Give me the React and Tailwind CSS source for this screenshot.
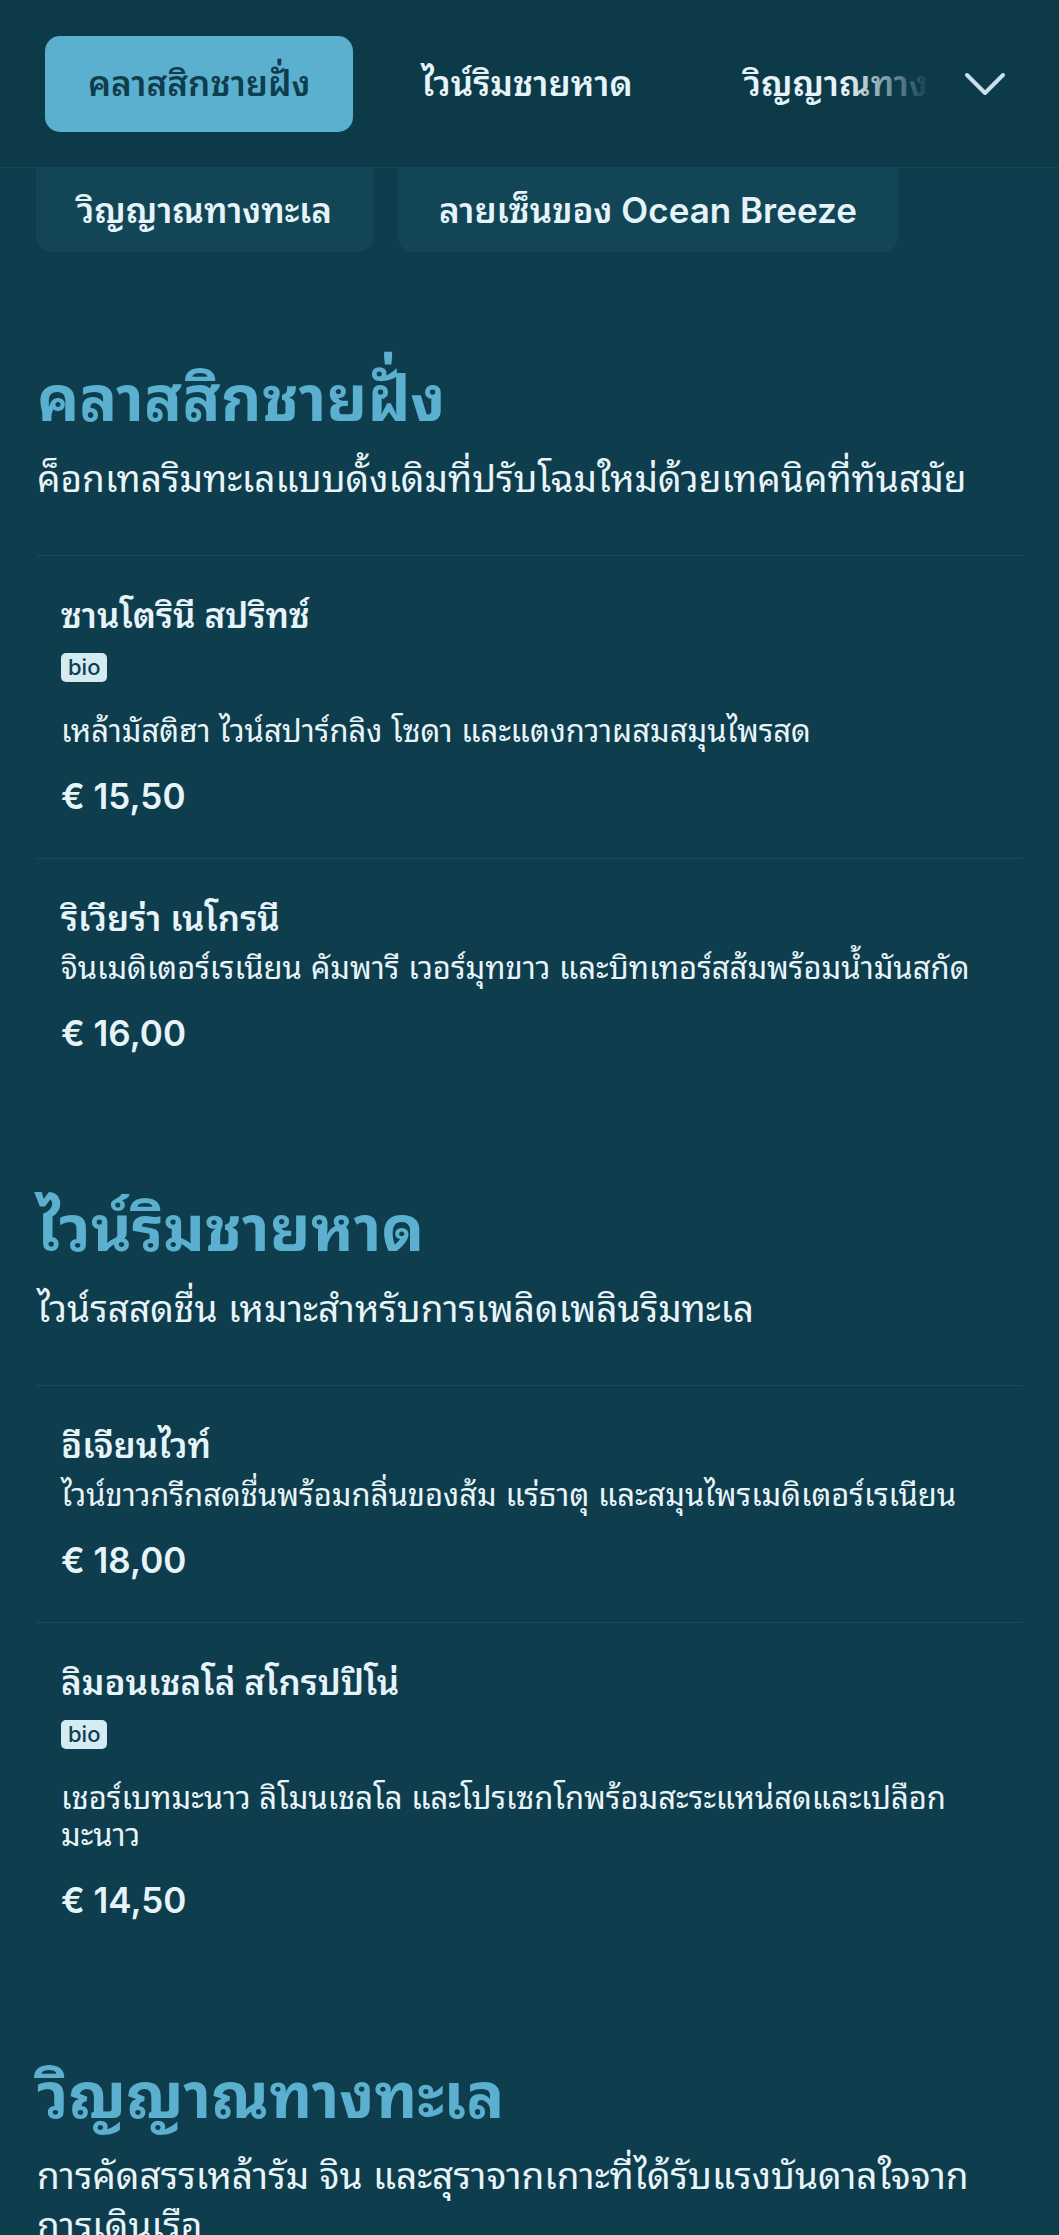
import React from 'react';

const tabs = ['คลาสสิกชายฝั่ง', 'ไวน์ริมชายหาด', 'วิญญาณทางทะเล', 'ลายเซ็นของ Ocean Breeze'];

const sections = [
    {
        title: 'คลาสสิกชายฝั่ง',
        desc: 'ค็อกเทลริมทะเลแบบดั้งเดิมที่ปรับโฉมใหม่ด้วยเทคนิคที่ทันสมัย',
        items: [
            { name: 'ซานโตรินี สปริทซ์', bio: true, desc: 'เหล้ามัสติฮา ไวน์สปาร์กลิง โซดา และแตงกวาผสมสมุนไพรสด', price: '€ 15,50' },
            { name: 'ริเวียร่า เนโกรนี', desc: 'จินเมดิเตอร์เรเนียน คัมพารี เวอร์มุทขาว และบิทเทอร์สส้มพร้อมน้ำมันสกัด', price: '€ 16,00' },
        ],
    },
    {
        title: 'ไวน์ริมชายหาด',
        desc: 'ไวน์รสสดชื่น เหมาะสำหรับการเพลิดเพลินริมทะเล',
        items: [
            { name: 'อีเจียนไวท์', desc: 'ไวน์ขาวกรีกสดชื่นพร้อมกลิ่นของส้ม แร่ธาตุ และสมุนไพรเมดิเตอร์เรเนียน', price: '€ 18,00' },
            { name: 'ลิมอนเชลโล่ สโกรปปิโน่', bio: true, desc: 'เชอร์เบทมะนาว ลิโมนเชลโล และโปรเซกโกพร้อมสะระแหน่สดและเปลือกมะนาว', price: '€ 14,50' },
        ],
    },
    {
        title: 'วิญญาณทางทะเล',
        desc: 'การคัดสรรเหล้ารัม จิน และสุราจากเกาะที่ได้รับแรงบันดาลใจจากการเดินเรือ',
        items: [],
    },
];

function MenuItem({ item }) {
    return (
        <div className="border-t border-[#1b4c5c] px-[24px] pt-[37px] pb-[40px]">
            <div className="text-[35px] leading-[44px] font-semibold text-[#e6f3f8]">{item.name}</div>
            {item.bio && (
                <div className="mt-[16px] mb-[30px] flex">
                    <span className="h-[29px] px-[7px] rounded-[5px] bg-[#d4ebf4] text-[#0e3e4e] text-[22px] leading-[29px] font-medium">bio</span>
                </div>
            )}
            <p className={`${item.bio ? '' : 'mt-[9px]'} text-[31px] leading-[37px] text-[#e8f4f8]`}>{item.desc}</p>
            <div className="mt-[25px] text-[35px] leading-[44px] font-semibold text-[#e6f3f8]">{item.price}</div>
        </div>
    );
}

export default function App() {
    return (
        <div className="min-h-screen bg-[#0e3e4e] font-['Inter','Noto_Sans_Thai_Looped',sans-serif] overflow-hidden">
            <header className="flex items-center h-[168px] pl-[45px] pr-[52px] bg-[#0c3a49] border-b border-[#134657]">
                <div className="relative flex-1 overflow-hidden">
                    <div className="flex gap-[25px] whitespace-nowrap">
                        {tabs.map((t, i) => (
                            <div
                                key={t}
                                className={`h-[96px] px-[43px] flex items-center rounded-[15px] text-[35px] font-semibold ${i === 0 ? 'bg-[#5bb0cf] text-[#0f3d4d]' : 'text-[#e6f3f8]'}`}
                            >
                                {t}
                            </div>
                        ))}
                    </div>
                    <div className="absolute right-0 top-0 h-full w-[85px] bg-linear-to-r from-transparent to-[#0c3a49]" />
                </div>
                <button className="ml-[32px] w-[44px] h-[26px] flex items-center justify-center">
                    <svg width="44" height="26" viewBox="0 0 44 26" fill="none">
                        <path d="M4 4 L22 22 L40 4" stroke="#c9e0e9" strokeWidth="4" strokeLinecap="round" strokeLinejoin="round" />
                    </svg>
                </button>
            </header>

            {/* Wrapped row of the category bar, partly under the header */}
            <div className="flex gap-[25px] px-[36px]">
                {tabs.slice(2).map(t => (
                    <div key={t} className="h-[84px] px-[41px] flex items-center rounded-b-[15px] bg-[#124657] text-[35px] font-semibold text-[#e6f3f8] whitespace-nowrap">
                        {t}
                    </div>
                ))}
            </div>

            <main className="px-[37px] pt-[13px]">
                {sections.map(s => (
                    <section key={s.title} className="pt-[93px]">
                        <h2 className="text-[63px] leading-[80px] font-bold text-[#5bb0cf]">{s.title}</h2>
                        <p className="mt-[16px] mb-[51px] text-[37px] leading-[50px] text-[#e8f4f8]">{s.desc}</p>
                        <div>
                            {s.items.map(item => <MenuItem key={item.name} item={item} />)}
                        </div>
                    </section>
                ))}
            </main>
        </div>
    );
}
